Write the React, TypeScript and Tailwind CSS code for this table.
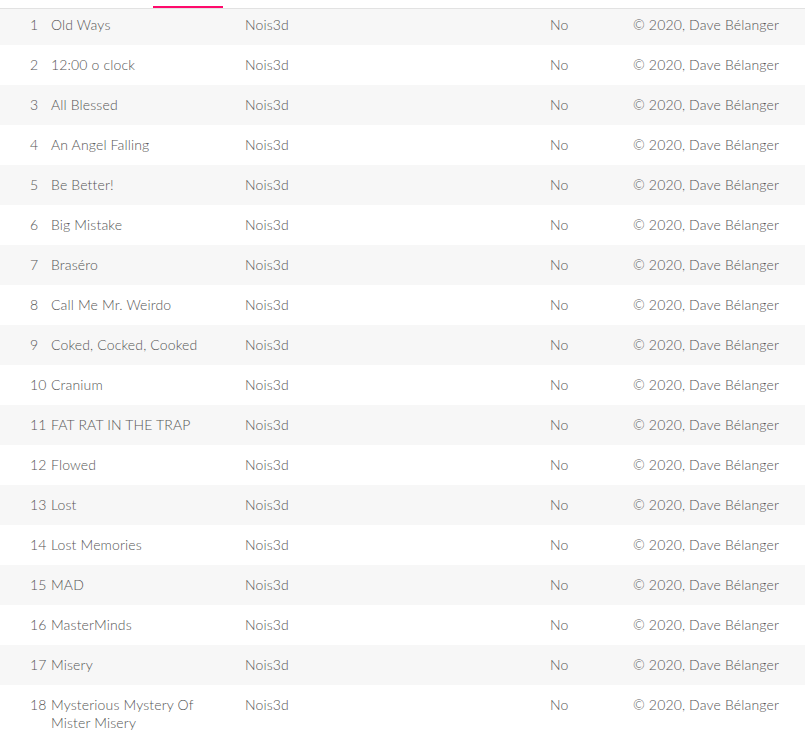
import React from "react";

const titles = [
  "Old Ways",
  "12:00 o clock",
  "All Blessed",
  "An Angel Falling",
  "Be Better!",
  "Big Mistake",
  "Braséro",
  "Call Me Mr. Weirdo",
  "Coked, Cocked, Cooked",
  "Cranium",
  "FAT RAT IN THE TRAP",
  "Flowed",
  "Lost",
  "Lost Memories",
  "MAD",
  "MasterMinds",
  "Misery",
  "Mysterious Mystery Of Mister Misery",
];

export default function App() {
  return (
    <div className="w-[805px] h-[731px] overflow-hidden bg-white text-[14px] leading-[18px] font-light tracking-[0.15px] text-[#555555]" style={{ fontFamily: '"Lato", "Open Sans", sans-serif' }}>
      <div className="relative h-[9px] border-b border-[#e2e2e2]">
        <div className="absolute left-[153px] top-[6px] w-[70px] h-[2px] bg-[#ff0a6c]" />
      </div>
      {titles.map((t, i) => (
        <div
          key={i}
          className={`grid grid-cols-[21px_194px_305px_83px_1fr] pl-[30px] ${i === 0 ? "pt-[7px] pb-[11px]" : "py-[11px]"} ${i % 2 === 0 ? "bg-[#f7f7f7]" : "bg-white"}`}
        >
          <div>{i + 1}</div>
          <div className="pr-[30px]">{t}</div>
          <div>Nois3d</div>
          <div>No</div>
          <div className="whitespace-nowrap">© 2020, Dave Bélanger</div>
        </div>
      ))}
    </div>
  );
}
